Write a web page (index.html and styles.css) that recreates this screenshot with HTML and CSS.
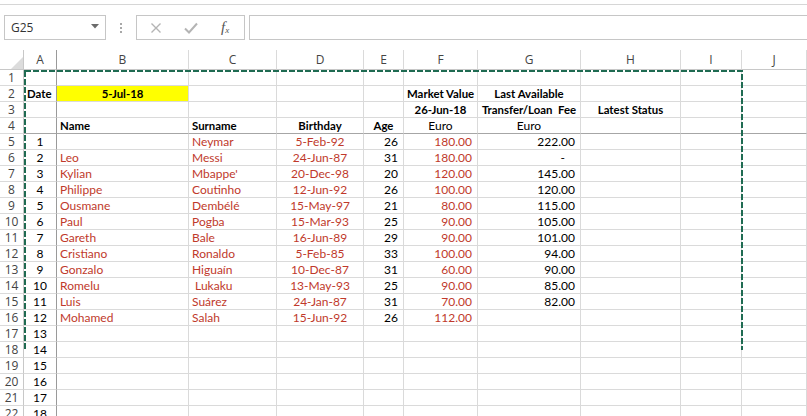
FILE: index.html
```html
<!DOCTYPE html>
<html>
<head>
<meta charset="utf-8">
<link rel="stylesheet" href="styles.css">
</head>
<body>
<div class="top"></div>
<div class="fbar">
  <div class="namebox"><span class="nbtext">G25</span>
    <svg class="nbarrow" width="8" height="5" viewBox="0 0 8 5"><polygon points="0,0 8,0 4,4.5" fill="#6b6b6b"/></svg>
  </div>
  <div class="grip"><i></i><i></i><i></i></div>
  <div class="fbtns">
    <svg class="ico" width="12" height="12" viewBox="0 0 12 12"><path d="M1.5 1.5 L10.5 10.5 M10.5 1.5 L1.5 10.5" stroke="#b4b4b4" stroke-width="1.4" fill="none"/></svg>
    <svg class="ico" width="14" height="12" viewBox="0 0 14 12"><path d="M1 6.5 L5 10.5 L13 1.5" stroke="#b4b4b4" stroke-width="2" fill="none"/></svg>
    <span class="fx"><i>f</i><sub>x</sub></span>
  </div>
  <div class="finput"></div>
</div>
<div class="sheet">
  <div class="row hdr"><div class="rh corner"><svg width="12" height="12" viewBox="0 0 12 12"><polygon points="12,0 12,12 0,12" fill="#dcdcdc"/></svg></div><div class="colA">A</div><div>B</div><div>C</div><div>D</div><div>E</div><div>F</div><div>G</div><div>H</div><div>I</div><div>J</div></div>
  <div class="row"><div class="rh">1</div><div class="colA"></div><div></div><div></div><div></div><div></div><div></div><div></div><div></div><div></div><div></div></div>
  <div class="row"><div class="rh">2</div><div class="colA b">Date</div><div class="b c yel">5-Jul-18</div><div></div><div></div><div></div><div class="b c">Market Value</div><div class="b c">Last Available</div><div></div><div></div><div></div></div>
  <div class="row"><div class="rh">3</div><div class="colA"></div><div></div><div></div><div></div><div></div><div class="b c">26-Jun-18</div><div class="b c">Transfer/Loan&nbsp; Fee</div><div class="b c">Latest Status</div><div></div><div></div></div>
  <div class="row r4"><div class="rh">4</div><div class="colA"></div><div class="b">Name</div><div class="b">Surname</div><div class="b c">Birthday</div><div class="b c">Age</div><div class="c">Euro</div><div class="c">Euro</div><div></div><div></div><div></div></div>
  <div class="row"><div class="rh">5</div><div class="colA c">1</div><div class="red"></div><div class="red">Neymar</div><div class="red c">5-Feb-92</div><div class="r">26</div><div class="red r">180.00</div><div class="r">222.00</div><div></div><div></div><div></div></div>
  <div class="row"><div class="rh">6</div><div class="colA c">2</div><div class="red">Leo</div><div class="red">Messi</div><div class="red c">24-Jun-87</div><div class="r">31</div><div class="red r">180.00</div><div class="r dash">-</div><div></div><div></div><div></div></div>
  <div class="row"><div class="rh">7</div><div class="colA c">3</div><div class="red">Kylian</div><div class="red">Mbappe'</div><div class="red c">20-Dec-98</div><div class="r">20</div><div class="red r">120.00</div><div class="r">145.00</div><div></div><div></div><div></div></div>
  <div class="row"><div class="rh">8</div><div class="colA c">4</div><div class="red">Philippe</div><div class="red">Coutinho</div><div class="red c">12-Jun-92</div><div class="r">26</div><div class="red r">100.00</div><div class="r">120.00</div><div></div><div></div><div></div></div>
  <div class="row"><div class="rh">9</div><div class="colA c">5</div><div class="red">Ousmane</div><div class="red">Dembélé</div><div class="red c">15-May-97</div><div class="r">21</div><div class="red r">80.00</div><div class="r">115.00</div><div></div><div></div><div></div></div>
  <div class="row"><div class="rh">10</div><div class="colA c">6</div><div class="red">Paul</div><div class="red">Pogba</div><div class="red c">15-Mar-93</div><div class="r">25</div><div class="red r">90.00</div><div class="r">105.00</div><div></div><div></div><div></div></div>
  <div class="row"><div class="rh">11</div><div class="colA c">7</div><div class="red">Gareth</div><div class="red">Bale</div><div class="red c">16-Jun-89</div><div class="r">29</div><div class="red r">90.00</div><div class="r">101.00</div><div></div><div></div><div></div></div>
  <div class="row"><div class="rh">12</div><div class="colA c">8</div><div class="red">Cristiano</div><div class="red">Ronaldo</div><div class="red c">5-Feb-85</div><div class="r">33</div><div class="red r">100.00</div><div class="r">94.00</div><div></div><div></div><div></div></div>
  <div class="row"><div class="rh">13</div><div class="colA c">9</div><div class="red">Gonzalo</div><div class="red">Higuaín</div><div class="red c">10-Dec-87</div><div class="r">31</div><div class="red r">60.00</div><div class="r">90.00</div><div></div><div></div><div></div></div>
  <div class="row"><div class="rh">14</div><div class="colA c">10</div><div class="red">Romelu</div><div class="red">&nbsp;Lukaku</div><div class="red c">13-May-93</div><div class="r">25</div><div class="red r">90.00</div><div class="r">85.00</div><div></div><div></div><div></div></div>
  <div class="row"><div class="rh">15</div><div class="colA c">11</div><div class="red">Luis</div><div class="red">Suárez</div><div class="red c">24-Jan-87</div><div class="r">31</div><div class="red r">70.00</div><div class="r">82.00</div><div></div><div></div><div></div></div>
  <div class="row"><div class="rh">16</div><div class="colA c">12</div><div class="red">Mohamed</div><div class="red">Salah</div><div class="red c">15-Jun-92</div><div class="r">26</div><div class="red r">112.00</div><div></div><div></div><div></div><div></div></div>
  <div class="row"><div class="rh">17</div><div class="colA c">13</div><div></div><div></div><div></div><div></div><div></div><div></div><div></div><div></div><div></div></div>
  <div class="row"><div class="rh">18</div><div class="colA c">14</div><div></div><div></div><div></div><div></div><div></div><div></div><div></div><div></div><div></div></div>
  <div class="row"><div class="rh">19</div><div class="colA c">15</div><div></div><div></div><div></div><div></div><div></div><div></div><div></div><div></div><div></div></div>
  <div class="row"><div class="rh">20</div><div class="colA c">16</div><div></div><div></div><div></div><div></div><div></div><div></div><div></div><div></div><div></div></div>
  <div class="row"><div class="rh">21</div><div class="colA c">17</div><div></div><div></div><div></div><div></div><div></div><div></div><div></div><div></div><div></div></div>
  <div class="row"><div class="rh">22</div><div class="colA c">18</div><div></div><div></div><div></div><div></div><div></div><div></div><div></div><div></div><div></div></div>
  <svg class="marquee" width="807" height="300" viewBox="0 0 807 300"><rect x="25" y="21" width="717" height="286" fill="none" stroke="#1f6b52" stroke-width="2" stroke-dasharray="6 2"/></svg>
</div>
</body>
</html>
```
FILE: styles.css
```css
html, body {
  margin: 0;
  padding: 0;
  background: #fff;
  overflow: hidden;
}
body {
  width: 807px;
  height: 416px;
  font-family: Lato, "Liberation Sans", sans-serif;
  color: #000;
}
.top {
  height: 4px;
  border-bottom: 1px solid #d6d6d6;
}
.fbar {
  margin-top: 10px;
  height: 25px;
  display: flex;
  align-items: stretch;
  padding-left: 4px;
}
.namebox {
  width: 102px;
  box-sizing: border-box;
  border: 1px solid #c6c6c6;
  display: flex;
  align-items: center;
  justify-content: space-between;
  padding: 0 6px 0 6px;
}
.nbtext {
  font-family: "Open Sans", sans-serif;
  font-size: 12px;
  color: #333;
}
.nbarrow {
  margin-top: -2px;
}
.grip {
  width: 30px;
  display: flex;
  flex-direction: column;
  align-items: center;
  justify-content: center;
  gap: 2px;
}
.grip i {
  display: block;
  width: 2px;
  height: 2px;
  background: #a8a8a8;
}
.fbtns {
  width: 109px;
  box-sizing: border-box;
  border: 1px solid #c6c6c6;
  display: flex;
  align-items: center;
  padding-left: 13px;
  gap: 22px;
}
.fx {
  font-family: "Liberation Serif", serif;
  font-size: 15px;
  color: #555;
  margin-left: 1px;
}
.fx sub {
  font-size: 9px;
  font-style: italic;
  vertical-align: -1px;
}
.finput {
  flex: 1;
  margin-left: 4px;
  margin-right: -4px;
  border: 1px solid #c6c6c6;
}
.sheet {
  margin-top: 10px;
  position: relative;
}
.row {
  display: grid;
  grid-template-columns: 24px 33px 132px 88px 87px 40px 74px 103px 100px 61px 65px;
  height: 16px;
}
.row > div {
  box-sizing: border-box;
  border-right: 1px solid #dadada;
  border-bottom: 1px solid #dadada;
  font-size: 12px;
  line-height: 14px;
  padding: 1px 3px 0 3px;
  white-space: nowrap;
  overflow: visible;
}
.row > .colA {
  border-right-color: #9a9a9a;
}
.hdr {
  height: 20px;
}
.hdr > div {
  font-family: "Open Sans", sans-serif;
  font-size: 12px;
  color: #444;
  text-align: center;
  line-height: 19px;
  padding-top: 0;
  border-bottom-color: #c8c8c8;
}
.hdr > .corner {
  display: flex;
  align-items: flex-end;
  justify-content: flex-end;
  padding: 0 2px 2px 0;
}
.rh {
  font-family: "Open Sans", sans-serif;
  color: #444;
  text-align: center;
  padding: 0 !important;
  line-height: 15px !important;
  border-right-color: #c8c8c8 !important;
}
.r4 > div:not(.rh) {
  border-bottom-color: #a6a6a6;
}
.b { font-weight: bold; font-size: 11.4px !important; }
.c { text-align: center; }
.r { text-align: right; padding-right: 5px !important; }
.red { color: #c0392b; }
.yel { background: #ffff00; }
.dash { padding-right: 15px !important; }
.marquee {
  position: absolute;
  left: 0;
  top: 0;
  pointer-events: none;
}
```
